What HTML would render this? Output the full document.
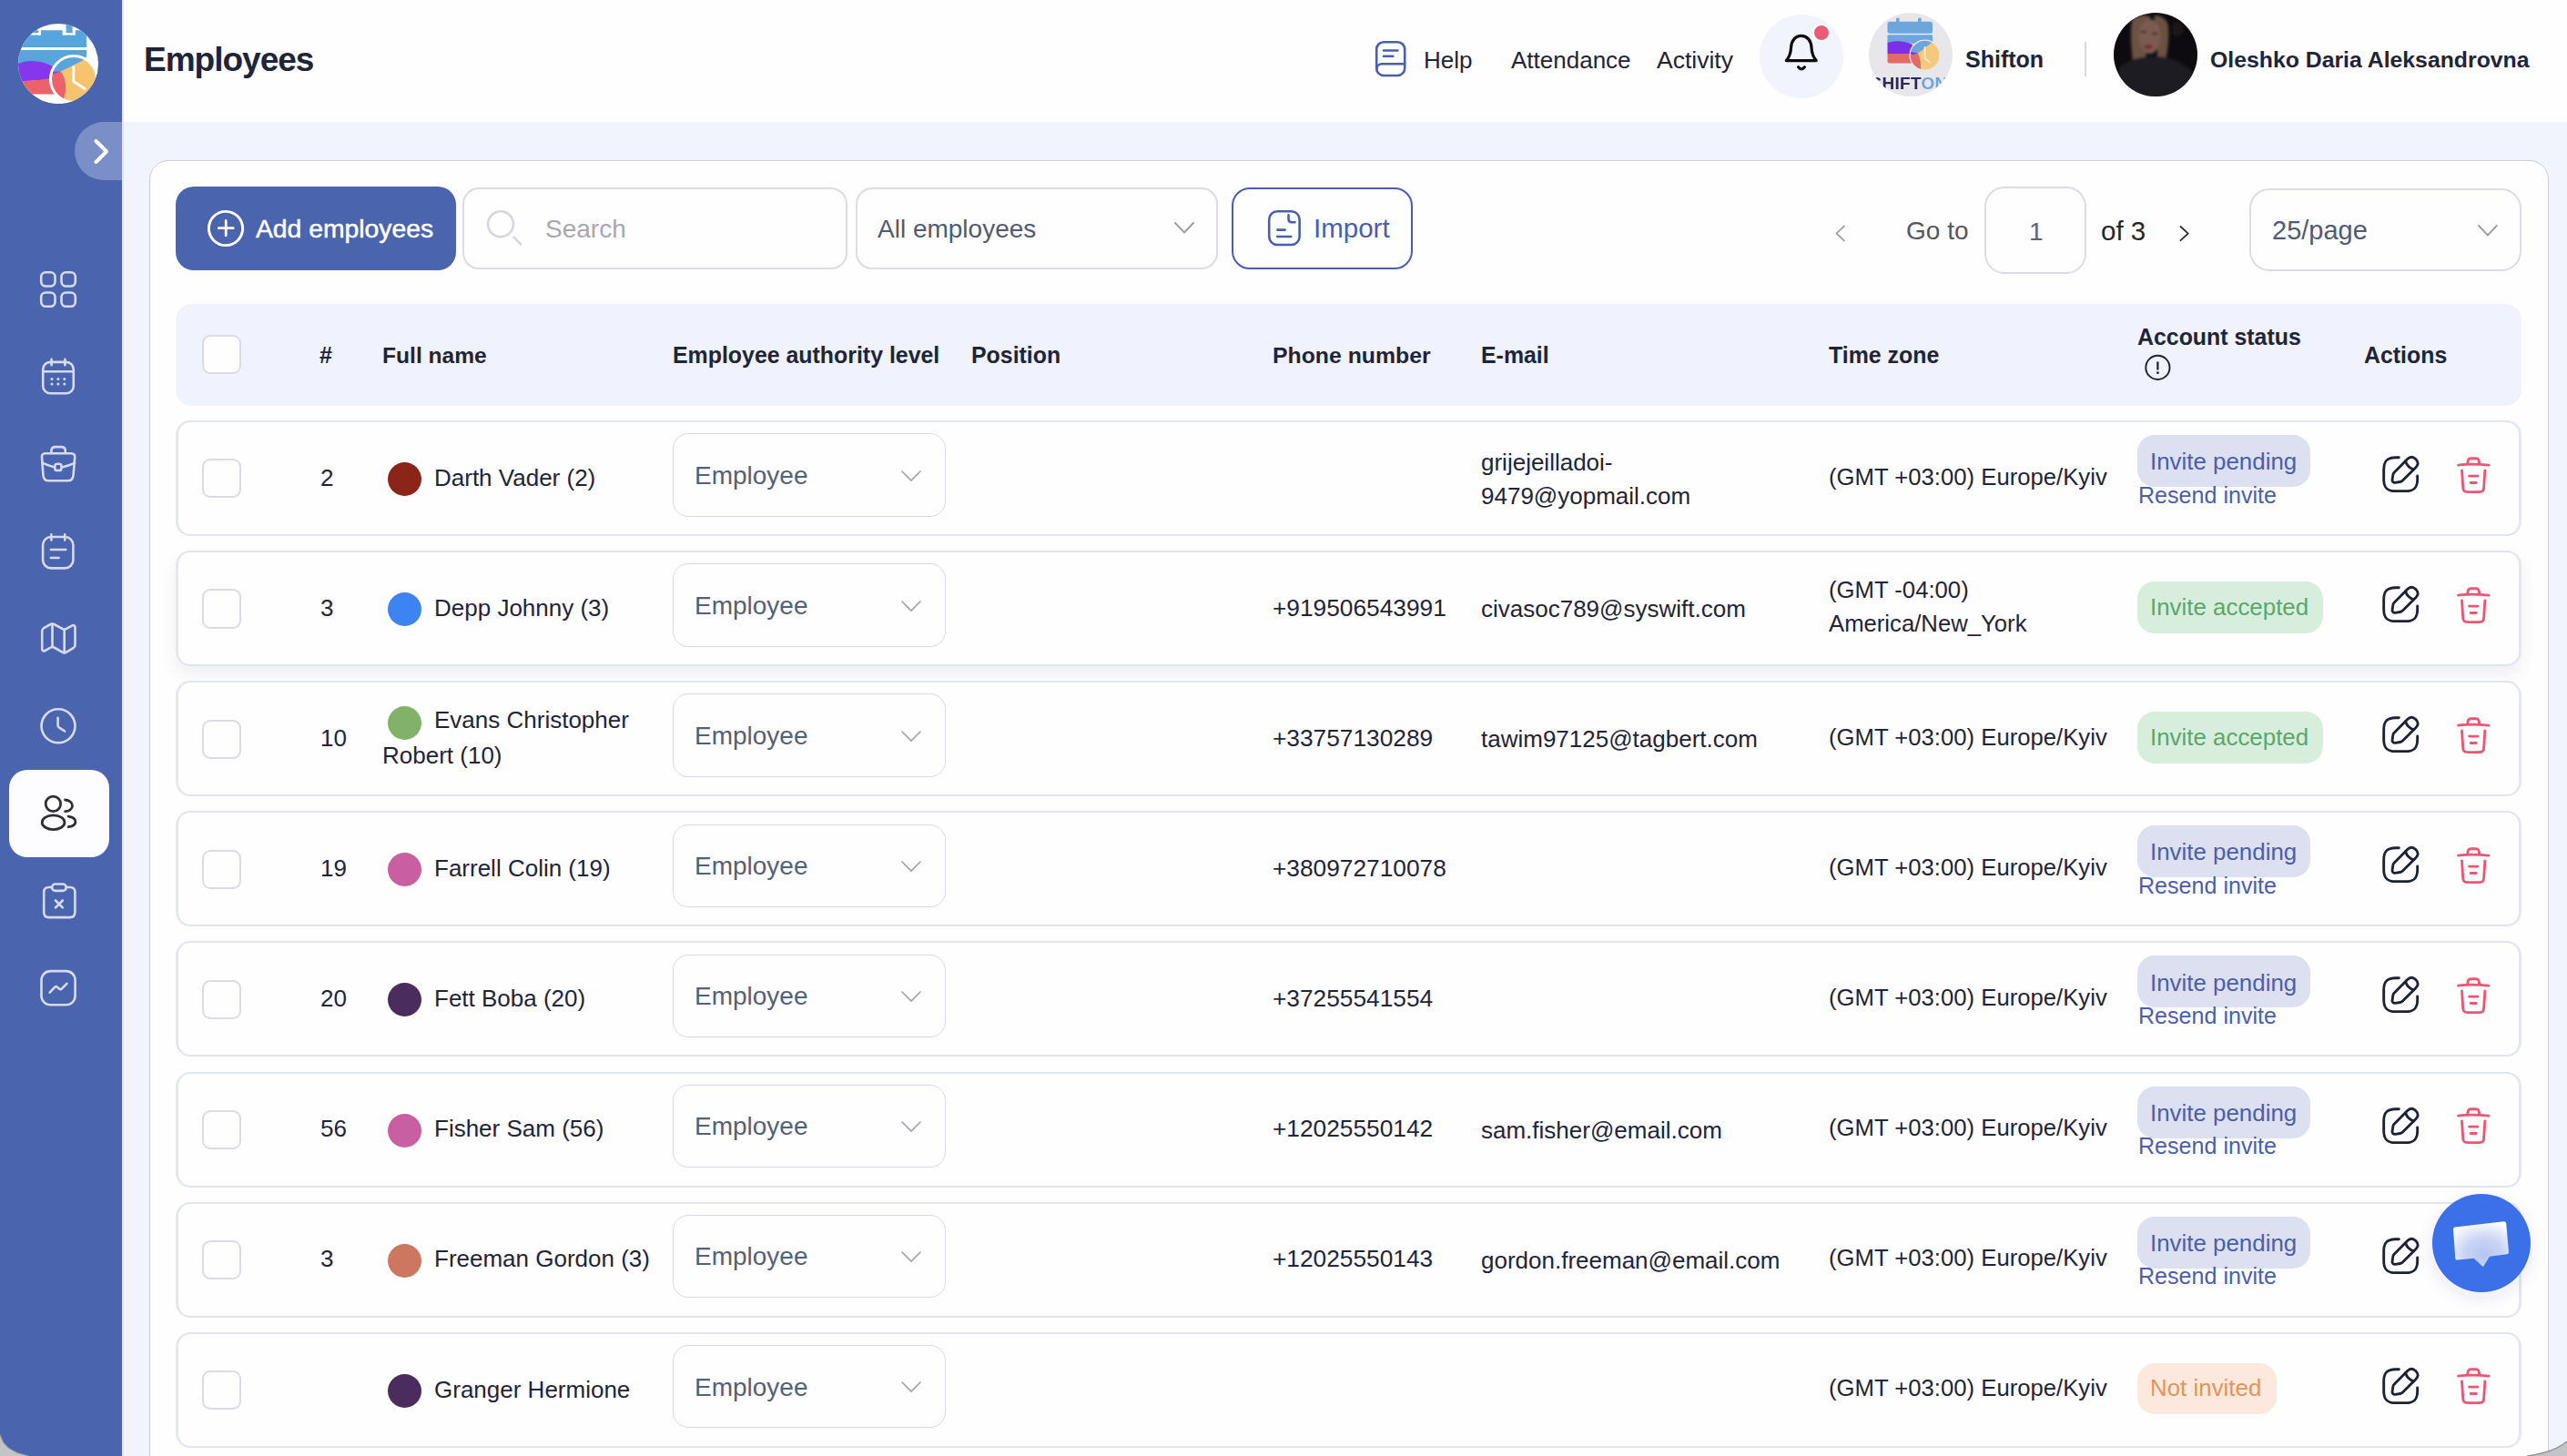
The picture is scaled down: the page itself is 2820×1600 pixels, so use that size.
<!DOCTYPE html>
<html><head><meta charset="utf-8"><title>Employees</title>
<style>
html,body{margin:0;padding:0;}
body{width:2820px;height:1600px;position:relative;overflow:hidden;background:#f1f3fd;font-family:"Liberation Sans", sans-serif;}
</style></head><body>
<div style="position:absolute;left:0px;top:0px;width:134px;height:1600px;background:#4a64ae;border-radius:0px;"></div>
<div style="position:absolute;left:134px;top:0px;width:2px;height:1600px;background:#e3e3ea;border-radius:0px;"></div>
<div style="position:absolute;left:136px;top:0px;width:2684px;height:134px;background:#fefefe;border-radius:0px;"></div>
<div style="position:absolute;left:164px;top:176px;width:2636px;height:1500px;background:#fefefe;border:1.5px solid #cdcdd3;box-sizing:border-box;border-radius:21px;"></div>
<svg style="position:absolute;left:20px;top:26px" width="88" height="88" viewBox="0 0 88 88">
<defs><clipPath id="lc"><circle cx="44" cy="44" r="44"/></clipPath></defs>
<circle cx="44" cy="44" r="44" fill="#ffffff"/>
<g clip-path="url(#lc)">
  <path d="M-2 7.2H52.5V1.1H59.7V7.2H75V26H-2Z" fill="#57a5dc"/>
  <rect x="12.5" y="10.2" width="12.4" height="2.3" fill="#ffffff"/>
  <rect x="22.3" y="7" width="2.6" height="5.5" fill="#ffffff"/>
  <rect x="48.7" y="10.2" width="14" height="2.3" fill="#ffffff"/>
  <rect x="48.7" y="6" width="3.8" height="6.5" fill="#ffffff"/>
  <rect x="59.7" y="6" width="3" height="6.5" fill="#ffffff"/>
  <path d="M-2 29H75V35L74 40C70 42 60 45 50 50L40 55C28 52 14 46 -2 44Z" fill="#57a5dc"/>
  <path d="M-2 45C12 38 30 40 45 52L48 57L38 60C25 63 12 63 -2 63Z" fill="#8536ef"/>
  <path d="M-2 63C14 63 28 62 39 59L47 57L52 72L50 80H-2Z" fill="#ec626b"/>
  <rect x="-2" y="77.5" width="54" height="14" fill="#ffffff"/>
</g>
<g clip-path="url(#lc)">
  <clipPath id="cc"><circle cx="61" cy="61" r="25.5"/></clipPath>
  <g clip-path="url(#cc)">
    <rect x="30" y="30" width="60" height="60" fill="#f6c46f"/>
    <path d="M30 30H80L79 36C70 41 60 46 46.5 52.6L36 58Z" fill="#57a5dc"/>
    <path d="M30 53L46.5 52.6L36 59Z" fill="#8536ef"/>
    <path d="M30 58L46.5 52.6C51 58 53 66 52 75C51 80 49 86 48 90H30Z" fill="#ec626b"/>
  </g>
  <circle cx="61" cy="61" r="25.5" fill="none" stroke="#ffffff" stroke-width="3"/>
  <path d="M60.8 48V63.5L73 71.5" fill="none" stroke="#ffffff" stroke-width="2.8" stroke-linecap="square"/>
</g></svg>
<div style="position:absolute;left:82px;top:134px;width:52px;height:64px;background:#7a8ec8;border-radius:32px 0 0 32px"></div>
<svg style="position:absolute;left:95px;top:145px;overflow:visible" width="35" height="40" viewBox="95 145 35 40" fill="none" ><path d="M105.5 155L117 166.5L105.5 178" stroke="#ffffff" stroke-width="4" stroke-linecap="round" stroke-linejoin="round"/></svg>
<svg style="position:absolute;left:30px;top:280px;overflow:visible" width="70" height="70" viewBox="30 280 70 70" fill="none" ><rect x="45.2" y="299.2" width="15.3" height="15.3" rx="5" stroke="#d5daf0" stroke-width="2.6" stroke-linecap="round" stroke-linejoin="round"/><rect x="67.5" y="299.2" width="15.3" height="15.3" rx="5" stroke="#d5daf0" stroke-width="2.6" stroke-linecap="round" stroke-linejoin="round"/><rect x="45.2" y="321.5" width="15.3" height="15.3" rx="5" stroke="#d5daf0" stroke-width="2.6" stroke-linecap="round" stroke-linejoin="round"/><rect x="67.5" y="321.5" width="15.3" height="15.3" rx="5" stroke="#d5daf0" stroke-width="2.6" stroke-linecap="round" stroke-linejoin="round"/></svg>
<svg style="position:absolute;left:30px;top:380px;overflow:visible" width="70" height="70" viewBox="30 380 70 70" fill="none" ><rect x="47.2" y="397.9" width="33.6" height="34.3" rx="8" stroke="#d5daf0" stroke-width="2.6" stroke-linecap="round" stroke-linejoin="round"/><path d="M47.2 408.3H80.8M56.6 394.9v6.4M71.4 394.9v6.4" stroke="#d5daf0" stroke-width="2.6" stroke-linecap="round" stroke-linejoin="round"/><circle cx="57" cy="416.5" r="1.5" fill="#d5daf0"/><circle cx="63.9" cy="416.5" r="1.5" fill="#d5daf0"/><circle cx="70.8" cy="416.5" r="1.5" fill="#d5daf0"/><circle cx="57" cy="422.1" r="1.5" fill="#d5daf0"/><circle cx="63.9" cy="422.1" r="1.5" fill="#d5daf0"/><circle cx="70.8" cy="422.1" r="1.5" fill="#d5daf0"/></svg>
<svg style="position:absolute;left:30px;top:480px;overflow:visible" width="70" height="70" viewBox="30 480 70 70" fill="none" ><path d="M49.5 498.2h29c2.6 0 3.9 1.5 3.7 4.1l-1.6 19.5c-.3 3.9-2.3 6.5-6.2 6.5H53.6c-3.9 0-5.9-2.6-6.2-6.5l-1.4-19.5c-.2-2.6 1.1-4.1 3.5-4.1Z" stroke="#d5daf0" stroke-width="2.6" stroke-linecap="round" stroke-linejoin="round"/><path d="M56.4 497.8v-2.2c0-3 1.6-4.5 4.6-4.5h6.2c3 0 4.6 1.5 4.6 4.5v2.2" stroke="#d5daf0" stroke-width="2.6" stroke-linecap="round" stroke-linejoin="round"/><path d="M46.6 508.6c4 2 8.4 3.6 12.6 4.6M69 513.2c4.5-1 9-2.6 13.1-4.6" stroke="#d5daf0" stroke-width="2.6" stroke-linecap="round" stroke-linejoin="round"/><rect x="60.3" y="509.8" width="7.2" height="7.2" rx="2.6" stroke="#d5daf0" stroke-width="2.6" stroke-linecap="round" stroke-linejoin="round"/></svg>
<svg style="position:absolute;left:30px;top:570px;overflow:visible" width="70" height="70" viewBox="30 570 70 70" fill="none" ><rect x="47.1" y="590" width="33.3" height="34.4" rx="9" stroke="#d5daf0" stroke-width="2.6" stroke-linecap="round" stroke-linejoin="round"/><path d="M56.4 587.2v6.2M71.2 587.2v6.2M55.9 604h16.4M55.9 613h8.7" stroke="#d5daf0" stroke-width="2.6" stroke-linecap="round" stroke-linejoin="round"/></svg>
<svg style="position:absolute;left:30px;top:670px;overflow:visible" width="70" height="70" viewBox="30 670 70 70" fill="none" ><path d="M46.2 693.5C46.2 692 46.9 691 48.2 690.2L55.6 686C56.8 685.3 58.2 685.3 59.4 686L68.9 691.1C70.1 691.8 71.3 691.8 72.5 691.1L79 687.6C80.9 686.6 82.5 687.5 82.5 689.5V708.8C82.5 710.3 81.8 711.4 80.5 712.1L72.5 716.8C71.3 717.5 70 717.5 68.9 716.8L59.4 711.5C58.2 710.8 57 710.8 55.8 711.5L49.5 715C47.7 716 46.2 715.1 46.2 713Z" stroke="#d5daf0" stroke-width="2.6" stroke-linecap="round" stroke-linejoin="round"/><path d="M57.5 685.8v25.2M70.7 691.8v25.5" stroke="#d5daf0" stroke-width="2.6" stroke-linecap="round" stroke-linejoin="round"/></svg>
<svg style="position:absolute;left:30px;top:760px;overflow:visible" width="70" height="70" viewBox="30 760 70 70" fill="none" ><circle cx="64" cy="797.8" r="18.5" stroke="#d5daf0" stroke-width="2.6" stroke-linecap="round" stroke-linejoin="round"/><path d="M63.6 788.8v8.4c0 .9.5 1.6 1.2 2.1l6.4 4.2" stroke="#d5daf0" stroke-width="2.6" stroke-linecap="round" stroke-linejoin="round"/></svg>
<div style="position:absolute;left:10px;top:846px;width:110px;height:96px;border-radius:20px;background:#fdfcfe"></div>
<svg style="position:absolute;left:30px;top:860px;overflow:visible" width="70" height="70" viewBox="30 860 70 70" fill="none" ><circle cx="58.4" cy="883.4" r="8.2" stroke="#2e2e35" stroke-width="2.8" stroke-linecap="round" stroke-linejoin="round"/><ellipse cx="58.6" cy="903.7" rx="12.4" ry="7.9" stroke="#2e2e35" stroke-width="2.8" stroke-linecap="round" stroke-linejoin="round"/><path d="M71.6 879c4.6.2 7.9 3.1 7.9 6.4s-3.3 6.1-7.9 6.3" stroke="#2e2e35" stroke-width="2.8" stroke-linecap="round" stroke-linejoin="round"/><path d="M75.2 897.1c4.6.8 7.7 3.1 7.7 5.8s-3.1 5-7.7 5.8" stroke="#2e2e35" stroke-width="2.8" stroke-linecap="round" stroke-linejoin="round"/></svg>
<svg style="position:absolute;left:30px;top:950px;overflow:visible" width="70" height="70" viewBox="30 950 70 70" fill="none" ><path d="M56.9 975H53.6c-3.6 0-5.4 2.1-5.4 5.6v21.6c0 3.6 2 5.9 5.6 5.9h23c3.6 0 5.6-2.3 5.6-5.9v-21.6c0-3.5-1.8-5.6-5.4-5.6H72.9" stroke="#d5daf0" stroke-width="2.6" stroke-linecap="round" stroke-linejoin="round"/><rect x="57.1" y="971.5" width="15.6" height="7.4" rx="3.7" stroke="#d5daf0" stroke-width="2.6" stroke-linecap="round" stroke-linejoin="round"/><path d="M61 989.5l7.8 7.8M68.8 989.5l-7.8 7.8" stroke="#d5daf0" stroke-width="2.6" stroke-linecap="round" stroke-linejoin="round"/></svg>
<svg style="position:absolute;left:30px;top:1050px;overflow:visible" width="70" height="70" viewBox="30 1050 70 70" fill="none" ><rect x="45.5" y="1067.1" width="37.1" height="37.2" rx="10" stroke="#d5daf0" stroke-width="2.6" stroke-linecap="round" stroke-linejoin="round"/><path d="M54.7 1090.7l5.2-5.6c.9-1 2.3-1 3.2-.2l1.8 1.6c.9.8 2.3.7 3.1-.2l5.4-5.5" stroke="#d5daf0" stroke-width="2.6" stroke-linecap="round" stroke-linejoin="round"/></svg>
<div style="position:absolute;left:158px;top:47.0px;font-size:37px;line-height:37px;font-weight:700;color:#1e2439;white-space:nowrap;letter-spacing:-1.0px;">Employees</div>
<svg style="position:absolute;left:1500px;top:35px;overflow:visible" width="60" height="60" viewBox="1500 35 60 60" fill="none" ><rect x="1512.2" y="46.2" width="31" height="36.8" rx="8" stroke="#4a5eae" stroke-width="2.6" stroke-linecap="round" stroke-linejoin="round"/><path d="M1512.2 76c0-3.3 2.6-5.8 5.8-5.8h25.2M1520 55.5h15.4M1520 61.8h10.3" stroke="#4a5eae" stroke-width="2.6" stroke-linecap="round" stroke-linejoin="round"/></svg>
<div style="position:absolute;left:1564px;top:53.0px;font-size:26px;line-height:26px;font-weight:400;color:#1e2439;white-space:nowrap;">Help</div>
<div style="position:absolute;left:1660px;top:53.0px;font-size:26px;line-height:26px;font-weight:400;color:#1e2439;white-space:nowrap;">Attendance</div>
<div style="position:absolute;left:1820px;top:52.6px;font-size:26.5px;line-height:26.5px;font-weight:400;color:#1e2439;white-space:nowrap;">Activity</div>
<div style="position:absolute;left:1933px;top:16px;width:92px;height:92px;border-radius:50%;background:#f1f3fd"></div>
<svg style="position:absolute;left:1950px;top:30px;overflow:visible" width="60" height="60" viewBox="1950 30 60 60" fill="none" ><path d="M1962.3 66.6h33c-3.6-4-5-8.6-5.3-14.6c-.4-7.3-4.8-12.7-11.2-12.7s-10.8 5.4-11.2 12.7c-.3 6-1.7 10.6-5.3 14.6Z" stroke="#0c0c10" stroke-width="3.2" stroke-linecap="round" stroke-linejoin="round"/><path d="M1975.6 73.8c1.4 1.6 2.4 2.2 3.4 2.2s2-.6 3.4-2.2" stroke="#0c0c10" stroke-width="3.2" stroke-linecap="round" stroke-linejoin="round"/></svg>
<div style="position:absolute;left:1991px;top:26px;width:20px;height:20px;border-radius:50%;background:#e85c75;border:2px solid #ffffff;box-sizing:border-box"></div>
<svg style="position:absolute;left:2053px;top:14px" width="92" height="92" viewBox="0 0 92 92">
<defs><clipPath id="sa"><circle cx="46" cy="46" r="46"/></clipPath><filter id="bl"><feGaussianBlur stdDeviation="0.7"/></filter></defs>
<circle cx="46" cy="46" r="46" fill="#e7e6eb"/>
<g clip-path="url(#sa)" filter="url(#bl)">
<rect x="20.5" y="9.8" width="49.5" height="13" rx="2.5" fill="#6ca6dc"/>
<rect x="30" y="5.6" width="3.6" height="8" rx="1.5" fill="#6ca6dc"/><rect x="54" y="5.6" width="3.6" height="8" rx="1.5" fill="#6ca6dc"/>

<rect x="20.5" y="24.3" width="49.5" height="9.5" fill="#6ca6dc"/>
<path d="M20.5 33C30 30 40 31 48 35V44.9H20.5Z" fill="#7d2fe8"/>
<path d="M20.5 44.9H48V55.6H23C21.5 55.6 20.5 54.5 20.5 53Z" fill="#e46a6a"/>
<circle cx="61.6" cy="46.7" r="16" fill="#f3c97c"/>
<path d="M45.6 46.7C45.6 37.9 52.8 30.7 61.6 30.7C64.5 30.7 67 31.4 69.2 32.7L54 44.5Z" fill="#6ca6dc"/>
<path d="M46 43L54 44.5L47 47Z" fill="#7d2fe8"/>
<path d="M45.6 46.7L54 44.5C56.5 50 57.5 56 57 62C50.5 60.5 45.6 54 45.6 46.7Z" fill="#e46a6a"/>
<circle cx="61.6" cy="46.7" r="16.6" fill="none" stroke="#e7e6eb" stroke-width="1.2"/>
<path d="M61.6 37V50L67.5 55" fill="none" stroke="#f8e8c8" stroke-width="1.8"/>
<text x="44" y="83.7" text-anchor="middle" font-family="Liberation Sans" font-weight="700" font-size="19" fill="#2a2560" letter-spacing="0.3">SHIFT<tspan fill="#6ca6dc">ON</tspan></text>
</g></svg>
<div style="position:absolute;left:2159px;top:53.3px;font-size:25px;line-height:25px;font-weight:700;color:#1e2439;white-space:nowrap;">Shifton</div>
<div style="position:absolute;left:2290px;top:46px;width:2px;height:38px;background:#d8d8e0;border-radius:0px;"></div>
<svg style="position:absolute;left:2322px;top:14px" width="92" height="92" viewBox="0 0 92 92">
<defs><clipPath id="ua"><circle cx="46" cy="46" r="46"/></clipPath>
<filter id="ub" x="-20%" y="-20%" width="140%" height="140%"><feGaussianBlur stdDeviation="1.6"/></filter></defs>
<circle cx="46" cy="46" r="46" fill="#0d0b10"/>
<g clip-path="url(#ua)" filter="url(#ub)">
<ellipse cx="70" cy="18" rx="6" ry="8" fill="#1a1412"/>
<path d="M20 8C24 3 34 2 40 4L38 30L33 62L22 60C19 42 18 22 20 8Z" fill="#6b5242"/>
<path d="M44 3C52 3 58 6 60 14C61 26 60 40 57 52L48 50L47 20Z" fill="#6a5141"/>
<ellipse cx="39.5" cy="26" rx="12" ry="19" fill="#7b5c51"/>
<ellipse cx="33" cy="21" rx="3.5" ry="1.2" fill="#3a2a28"/>
<ellipse cx="45" cy="23" rx="3.5" ry="1.2" fill="#3a2a28"/>
<ellipse cx="38" cy="37.5" rx="4.8" ry="2.6" fill="#7a2a31"/>
<path d="M6 60C18 50 32 48 46 48C62 48 74 54 86 64V92H6Z" fill="#1c1a20"/>
</g></svg>
<div style="position:absolute;left:2428px;top:53.5px;font-size:24.8px;line-height:24.8px;font-weight:700;color:#1e2439;white-space:nowrap;">Oleshko Daria Aleksandrovna</div>
<div style="position:absolute;left:193px;top:205px;width:308px;height:92px;background:#4a64ae;border-radius:20px;"></div>
<svg style="position:absolute;left:225px;top:228px;overflow:visible" width="46" height="46" viewBox="225 228 46 46" fill="none" ><circle cx="248" cy="251" r="18.6" stroke="#ffffff" stroke-width="2.9"/><path d="M240.3 250.7H256.2M248.2 242.5V258.8" stroke="#ffffff" stroke-width="2.8" stroke-linecap="round"/></svg>
<div style="position:absolute;left:281px;top:237.1px;font-size:28.3px;line-height:28.3px;font-weight:400;color:#ffffff;white-space:nowrap;-webkit-text-stroke:0.5px #ffffff;">Add employees</div>
<div style="position:absolute;left:508px;top:206px;width:423px;height:90px;background:#fefefe;border:2px solid #dddbe7;box-sizing:border-box;border-radius:18px;"></div>
<svg style="position:absolute;left:528px;top:225px;overflow:visible" width="50" height="50" viewBox="528 225 50 50" fill="none" ><circle cx="550" cy="246.3" r="14" stroke="#d7d5e3" stroke-width="2.6"/><path d="M564.5 260.7L572 268.3" stroke="#d7d5e3" stroke-width="2.6" stroke-linecap="round"/></svg>
<div style="position:absolute;left:599px;top:237.7px;font-size:28px;line-height:28px;font-weight:400;color:#a8a7b1;white-space:nowrap;">Search</div>
<div style="position:absolute;left:940px;top:206px;width:398px;height:90px;background:#fefefe;border:2px solid #dddbe7;box-sizing:border-box;border-radius:18px;"></div>
<div style="position:absolute;left:964px;top:237.7px;font-size:28px;line-height:28px;font-weight:400;color:#505b72;white-space:nowrap;">All employees</div>
<svg style="position:absolute;left:1288.5px;top:243px;overflow:visible" width="24" height="14.5" viewBox="1288.5 243 24 14.5" fill="none" ><path d="M1290.5 245L1300.5 255.5L1310.5 245" stroke="#9d9da8" stroke-width="1.9" stroke-linecap="round" stroke-linejoin="round"/></svg>
<div style="position:absolute;left:1353px;top:206px;width:199px;height:90px;background:#fefefe;border:2.5px solid #4a5eae;box-sizing:border-box;border-radius:20px;"></div>
<svg style="position:absolute;left:1385px;top:222px;overflow:visible" width="60" height="60" viewBox="1385 222 60 60" fill="none" ><rect x="1394.2" y="232.2" width="33.4" height="36.8" rx="9" stroke="#4a5eae" stroke-width="2.6" stroke-linecap="round" stroke-linejoin="round"/><path d="M1415.5 236.4v4.2c0 2.3 1.3 3.7 3.6 3.7h3.4M1403.3 252.6h8.3M1403.3 260h15" stroke="#4a5eae" stroke-width="2.6" stroke-linecap="round" stroke-linejoin="round"/></svg>
<div style="position:absolute;left:1443px;top:236.4px;font-size:29.5px;line-height:29.5px;font-weight:400;color:#4a5eae;white-space:nowrap;">Import</div>
<svg style="position:absolute;left:2010px;top:242px;overflow:visible" width="25" height="28" viewBox="2010 242 25 28" fill="none" ><path d="M2026 248.5L2017.5 256.5L2026 264.5" stroke="#a3a3ab" stroke-width="1.8" stroke-linecap="round" stroke-linejoin="round"/></svg>
<div style="position:absolute;left:2094px;top:240.1px;font-size:28px;line-height:28px;font-weight:400;color:#56565d;white-space:nowrap;">Go to</div>
<div style="position:absolute;left:2180px;top:205px;width:112px;height:96px;background:#fefefe;border:2px solid #dddbe7;box-sizing:border-box;border-radius:22px;"></div>
<div style="position:absolute;left:2229px;top:240.8px;font-size:28px;line-height:28px;font-weight:400;color:#5a6478;white-space:nowrap;">1</div>
<div style="position:absolute;left:2308px;top:238.8px;font-size:29.5px;line-height:29.5px;font-weight:400;color:#25252c;white-space:nowrap;">of 3</div>
<svg style="position:absolute;left:2388px;top:242px;overflow:visible" width="25" height="28" viewBox="2388 242 25 28" fill="none" ><path d="M2395.5 249L2403.8 256.6L2395.5 264.2" stroke="#2b2b33" stroke-width="1.8" stroke-linecap="round" stroke-linejoin="round"/></svg>
<div style="position:absolute;left:2471px;top:207px;width:299px;height:91px;background:#fefefe;border:2px solid #dddbe7;box-sizing:border-box;border-radius:22px;"></div>
<div style="position:absolute;left:2496px;top:239.3px;font-size:29px;line-height:29px;font-weight:400;color:#505b72;white-space:nowrap;">25/page</div>
<svg style="position:absolute;left:2721px;top:246px;overflow:visible" width="23.8" height="14.5" viewBox="2721 246 23.8 14.5" fill="none" ><path d="M2723 248L2732.9 258.5L2742.8 248" stroke="#9d9da8" stroke-width="1.9" stroke-linecap="round" stroke-linejoin="round"/></svg>
<div style="position:absolute;left:193px;top:334px;width:2577px;height:112px;background:#f0f2fd;border-radius:18px;"></div>
<div style="position:absolute;left:221.5px;top:368px;width:43px;height:43px;background:#fefefe;border:2px solid #dcdae5;box-sizing:border-box;border-radius:9px;"></div>
<div style="position:absolute;left:351px;top:378.3px;font-size:25px;line-height:25px;font-weight:700;color:#1e2439;white-space:nowrap;">#</div>
<div style="position:absolute;left:420px;top:378.7px;font-size:24.6px;line-height:24.6px;font-weight:700;color:#1e2439;white-space:nowrap;">Full name</div>
<div style="position:absolute;left:739px;top:378.4px;font-size:24.9px;line-height:24.9px;font-weight:700;color:#1e2439;white-space:nowrap;">Employee authority level</div>
<div style="position:absolute;left:1067px;top:378.4px;font-size:24.9px;line-height:24.9px;font-weight:700;color:#1e2439;white-space:nowrap;">Position</div>
<div style="position:absolute;left:1398px;top:378.5px;font-size:24.8px;line-height:24.8px;font-weight:700;color:#1e2439;white-space:nowrap;">Phone number</div>
<div style="position:absolute;left:1627px;top:378.4px;font-size:24.9px;line-height:24.9px;font-weight:700;color:#1e2439;white-space:nowrap;">E-mail</div>
<div style="position:absolute;left:2009px;top:378.4px;font-size:24.9px;line-height:24.9px;font-weight:700;color:#1e2439;white-space:nowrap;">Time zone</div>
<div style="position:absolute;left:2348px;top:357.8px;font-size:24.9px;line-height:24.9px;font-weight:700;color:#1e2439;white-space:nowrap;">Account status</div>
<svg style="position:absolute;left:2350px;top:385px;overflow:visible" width="40" height="40" viewBox="2350 385 40 40" fill="none" ><circle cx="2370.4" cy="403.9" r="13.1" stroke="#1d2136" stroke-width="1.9"/><path d="M2370.4 398.3v7.4" stroke="#1d2136" stroke-width="2.2" stroke-linecap="round"/><circle cx="2370.4" cy="409.7" r="1.4" fill="#1d2136"/></svg>
<div style="position:absolute;left:2597px;top:378.4px;font-size:24.9px;line-height:24.9px;font-weight:700;color:#1e2439;white-space:nowrap;">Actions</div>
<div style="position:absolute;left:193px;top:462.0px;width:2577px;height:127px;background:#fefefe;border:2px solid #e1e4f3;box-sizing:border-box;border-radius:16px;border-left:3.5px solid #e2e7f2;border-right:3.5px solid #e2e7f2;"></div>
<div style="position:absolute;left:221.5px;top:504.3px;width:43px;height:43.2px;background:#fefefe;border:2px solid #dcdae5;box-sizing:border-box;border-radius:9px;"></div>
<div style="position:absolute;left:352px;top:511.8px;font-size:26px;line-height:26px;font-weight:400;color:#1e2439;white-space:nowrap;">2</div>
<div style="position:absolute;left:426px;top:508.0px;width:37px;height:37px;border-radius:50%;background:#8b2519"></div>
<div style="position:absolute;left:477px;top:511.8px;font-size:26px;line-height:26px;font-weight:400;color:#1e2439;white-space:nowrap;">Darth Vader (2)</div>
<div style="position:absolute;left:739px;top:476.2px;width:300px;height:91.5px;background:#fefefe;border:1.8px solid #dbd9e5;box-sizing:border-box;border-radius:17px;"></div>
<div style="position:absolute;left:763px;top:508.8px;font-size:28px;line-height:28px;font-weight:400;color:#536077;white-space:nowrap;">Employee</div>
<svg style="position:absolute;left:989px;top:515.5px;overflow:visible" width="24" height="14.2" viewBox="989 515.5 24 14.2" fill="none" ><path d="M991 517.5L1001.0 527.7L1011 517.5" stroke="#a3a3ad" stroke-width="1.7" stroke-linecap="round" stroke-linejoin="round"/></svg>
<div style="position:absolute;left:1627px;top:494.5px;font-size:26px;line-height:26px;font-weight:400;color:#1e2439;white-space:nowrap;">grijejeilladoi-</div><div style="position:absolute;left:1627px;top:531.5px;font-size:26px;line-height:26px;font-weight:400;color:#1e2439;white-space:nowrap;">9479@yopmail.com</div>
<div style="position:absolute;left:2009px;top:511.5px;font-size:25.7px;line-height:25.7px;font-weight:400;color:#1e2439;white-space:nowrap;">(GMT +03:00) Europe/Kyiv</div>
<div style="position:absolute;left:2348px;top:478.0px;width:190px;height:57px;background:#dde0f1;border-radius:19px;"></div>
<div style="position:absolute;left:2362px;top:495.1px;font-size:25.9px;line-height:25.9px;font-weight:400;color:#4a5eae;white-space:nowrap;">Invite pending</div>
<div style="position:absolute;left:2349px;top:531.6px;font-size:25.1px;line-height:25.1px;font-weight:400;color:#4a5eae;white-space:nowrap;">Resend invite</div>
<svg style="position:absolute;left:2614.5px;top:499.0px" width="44.4" height="44.4" viewBox="0 0 24 24" fill="none" stroke="#1d2136" stroke-width="1.55" stroke-linecap="round" stroke-linejoin="round"><path d="M11 2H9C4 2 2 4 2 9v6c0 5 2 7 7 7h6c5 0 7-2 7-7v-2" /><path d="M16.04 3.02 8.16 10.9c-.3.3-.6.89-.66 1.32l-.43 3.01c-.16 1.09.61 1.85 1.7 1.7l3.01-.43c.42-.06 1.01-.36 1.32-.66l7.88-7.88c1.36-1.36 2-2.94 0-4.94-2-2-3.58-1.36-4.94 0Z" /><path d="M14.91 4.15a7.144 7.144 0 0 0 4.94 4.94" /></svg>
<svg style="position:absolute;left:2694.5px;top:499.5px" width="44.4" height="44.4" viewBox="0 0 24 24" fill="none" stroke="#ec5673" stroke-width="1.55" stroke-linecap="round" stroke-linejoin="round"><path d="M21 5.98c-3.33-.33-6.68-.5-10.02-.5-1.98 0-3.96.1-5.94.3L3 5.98" /><path d="m8.5 4.97.22-1.31C8.88 2.71 9 2 10.69 2h2.62c1.69 0 1.82.75 1.97 1.67l.22 1.3" /><path d="m18.85 9.14-.65 10.07C18.09 20.78 18 22 15.21 22H8.79C6 22 5.91 20.78 5.8 19.21L5.15 9.14" /><path d="M10.33 16.5h3.33M9.5 12.5h5" /></svg>
<div style="position:absolute;left:193px;top:605.1px;width:2577px;height:127px;background:#fefefe;border:2px solid #e1e4f3;box-sizing:border-box;border-radius:16px;box-shadow:0 10px 18px rgba(60,60,110,0.07);border-left:3.5px solid #e2e7f2;border-right:3.5px solid #e2e7f2;"></div>
<div style="position:absolute;left:221.5px;top:647.4px;width:43px;height:43.2px;background:#fefefe;border:2px solid #dcdae5;box-sizing:border-box;border-radius:9px;"></div>
<div style="position:absolute;left:352px;top:654.9px;font-size:26px;line-height:26px;font-weight:400;color:#1e2439;white-space:nowrap;">3</div>
<div style="position:absolute;left:426px;top:651.1px;width:37px;height:37px;border-radius:50%;background:#3d83f1"></div>
<div style="position:absolute;left:477px;top:654.9px;font-size:26px;line-height:26px;font-weight:400;color:#1e2439;white-space:nowrap;">Depp Johnny (3)</div>
<div style="position:absolute;left:739px;top:619.3000000000001px;width:300px;height:91.5px;background:#fefefe;border:1.8px solid #dbd9e5;box-sizing:border-box;border-radius:17px;"></div>
<div style="position:absolute;left:763px;top:651.9px;font-size:28px;line-height:28px;font-weight:400;color:#536077;white-space:nowrap;">Employee</div>
<svg style="position:absolute;left:989px;top:658.6px;overflow:visible" width="24" height="14.2" viewBox="989 658.6 24 14.2" fill="none" ><path d="M991 660.6L1001.0 670.8000000000001L1011 660.6" stroke="#a3a3ad" stroke-width="1.7" stroke-linecap="round" stroke-linejoin="round"/></svg>
<div style="position:absolute;left:1398px;top:654.6px;font-size:26.3px;line-height:26.3px;font-weight:400;color:#1e2439;white-space:nowrap;">+919506543991</div>
<div style="position:absolute;left:1627px;top:656.1px;font-size:26px;line-height:26px;font-weight:400;color:#1e2439;white-space:nowrap;">civasoc789@syswift.com</div>
<div style="position:absolute;left:2009px;top:636.4px;font-size:25.7px;line-height:25.7px;font-weight:400;color:#1e2439;white-space:nowrap;">(GMT -04:00)</div><div style="position:absolute;left:2009px;top:672.9px;font-size:25.7px;line-height:25.7px;font-weight:400;color:#1e2439;white-space:nowrap;">America/New_York</div>
<div style="position:absolute;left:2348px;top:638.6px;width:204px;height:57.5px;background:#d7eedc;border-radius:19px;"></div>
<div style="position:absolute;left:2362px;top:654.5px;font-size:25.9px;line-height:25.9px;font-weight:400;color:#5aa76b;white-space:nowrap;">Invite accepted</div>
<svg style="position:absolute;left:2614.5px;top:642.1px" width="44.4" height="44.4" viewBox="0 0 24 24" fill="none" stroke="#1d2136" stroke-width="1.55" stroke-linecap="round" stroke-linejoin="round"><path d="M11 2H9C4 2 2 4 2 9v6c0 5 2 7 7 7h6c5 0 7-2 7-7v-2" /><path d="M16.04 3.02 8.16 10.9c-.3.3-.6.89-.66 1.32l-.43 3.01c-.16 1.09.61 1.85 1.7 1.7l3.01-.43c.42-.06 1.01-.36 1.32-.66l7.88-7.88c1.36-1.36 2-2.94 0-4.94-2-2-3.58-1.36-4.94 0Z" /><path d="M14.91 4.15a7.144 7.144 0 0 0 4.94 4.94" /></svg>
<svg style="position:absolute;left:2694.5px;top:642.6px" width="44.4" height="44.4" viewBox="0 0 24 24" fill="none" stroke="#ec5673" stroke-width="1.55" stroke-linecap="round" stroke-linejoin="round"><path d="M21 5.98c-3.33-.33-6.68-.5-10.02-.5-1.98 0-3.96.1-5.94.3L3 5.98" /><path d="m8.5 4.97.22-1.31C8.88 2.71 9 2 10.69 2h2.62c1.69 0 1.82.75 1.97 1.67l.22 1.3" /><path d="m18.85 9.14-.65 10.07C18.09 20.78 18 22 15.21 22H8.79C6 22 5.91 20.78 5.8 19.21L5.15 9.14" /><path d="M10.33 16.5h3.33M9.5 12.5h5" /></svg>
<div style="position:absolute;left:193px;top:748.2px;width:2577px;height:127px;background:#fefefe;border:2px solid #e1e4f3;box-sizing:border-box;border-radius:16px;border-left:3.5px solid #e2e7f2;border-right:3.5px solid #e2e7f2;"></div>
<div style="position:absolute;left:221.5px;top:790.5px;width:43px;height:43.2px;background:#fefefe;border:2px solid #dcdae5;box-sizing:border-box;border-radius:9px;"></div>
<div style="position:absolute;left:352px;top:798.0px;font-size:26px;line-height:26px;font-weight:400;color:#1e2439;white-space:nowrap;">10</div>
<div style="position:absolute;left:426px;top:776.2px;width:37px;height:37px;border-radius:50%;background:#82b26a"></div>
<div style="position:absolute;left:477px;top:778.0px;font-size:26px;line-height:26px;font-weight:400;color:#1e2439;white-space:nowrap;">Evans Christopher</div>
<div style="position:absolute;left:420px;top:817.0px;font-size:26px;line-height:26px;font-weight:400;color:#1e2439;white-space:nowrap;">Robert (10)</div>
<div style="position:absolute;left:739px;top:762.4000000000001px;width:300px;height:91.5px;background:#fefefe;border:1.8px solid #dbd9e5;box-sizing:border-box;border-radius:17px;"></div>
<div style="position:absolute;left:763px;top:795.0px;font-size:28px;line-height:28px;font-weight:400;color:#536077;white-space:nowrap;">Employee</div>
<svg style="position:absolute;left:989px;top:801.7px;overflow:visible" width="24" height="14.2" viewBox="989 801.7 24 14.2" fill="none" ><path d="M991 803.7L1001.0 813.9000000000001L1011 803.7" stroke="#a3a3ad" stroke-width="1.7" stroke-linecap="round" stroke-linejoin="round"/></svg>
<div style="position:absolute;left:1398px;top:797.7px;font-size:26.3px;line-height:26.3px;font-weight:400;color:#1e2439;white-space:nowrap;">+33757130289</div>
<div style="position:absolute;left:1627px;top:799.2px;font-size:26px;line-height:26px;font-weight:400;color:#1e2439;white-space:nowrap;">tawim97125@tagbert.com</div>
<div style="position:absolute;left:2009px;top:797.7px;font-size:25.7px;line-height:25.7px;font-weight:400;color:#1e2439;white-space:nowrap;">(GMT +03:00) Europe/Kyiv</div>
<div style="position:absolute;left:2348px;top:781.7px;width:204px;height:57.5px;background:#d7eedc;border-radius:19px;"></div>
<div style="position:absolute;left:2362px;top:797.6px;font-size:25.9px;line-height:25.9px;font-weight:400;color:#5aa76b;white-space:nowrap;">Invite accepted</div>
<svg style="position:absolute;left:2614.5px;top:785.2px" width="44.4" height="44.4" viewBox="0 0 24 24" fill="none" stroke="#1d2136" stroke-width="1.55" stroke-linecap="round" stroke-linejoin="round"><path d="M11 2H9C4 2 2 4 2 9v6c0 5 2 7 7 7h6c5 0 7-2 7-7v-2" /><path d="M16.04 3.02 8.16 10.9c-.3.3-.6.89-.66 1.32l-.43 3.01c-.16 1.09.61 1.85 1.7 1.7l3.01-.43c.42-.06 1.01-.36 1.32-.66l7.88-7.88c1.36-1.36 2-2.94 0-4.94-2-2-3.58-1.36-4.94 0Z" /><path d="M14.91 4.15a7.144 7.144 0 0 0 4.94 4.94" /></svg>
<svg style="position:absolute;left:2694.5px;top:785.7px" width="44.4" height="44.4" viewBox="0 0 24 24" fill="none" stroke="#ec5673" stroke-width="1.55" stroke-linecap="round" stroke-linejoin="round"><path d="M21 5.98c-3.33-.33-6.68-.5-10.02-.5-1.98 0-3.96.1-5.94.3L3 5.98" /><path d="m8.5 4.97.22-1.31C8.88 2.71 9 2 10.69 2h2.62c1.69 0 1.82.75 1.97 1.67l.22 1.3" /><path d="m18.85 9.14-.65 10.07C18.09 20.78 18 22 15.21 22H8.79C6 22 5.91 20.78 5.8 19.21L5.15 9.14" /><path d="M10.33 16.5h3.33M9.5 12.5h5" /></svg>
<div style="position:absolute;left:193px;top:891.3px;width:2577px;height:127px;background:#fefefe;border:2px solid #e1e4f3;box-sizing:border-box;border-radius:16px;border-left:3.5px solid #e2e7f2;border-right:3.5px solid #e2e7f2;"></div>
<div style="position:absolute;left:221.5px;top:933.5999999999999px;width:43px;height:43.2px;background:#fefefe;border:2px solid #dcdae5;box-sizing:border-box;border-radius:9px;"></div>
<div style="position:absolute;left:352px;top:941.1px;font-size:26px;line-height:26px;font-weight:400;color:#1e2439;white-space:nowrap;">19</div>
<div style="position:absolute;left:426px;top:937.3px;width:37px;height:37px;border-radius:50%;background:#c95fa0"></div>
<div style="position:absolute;left:477px;top:941.1px;font-size:26px;line-height:26px;font-weight:400;color:#1e2439;white-space:nowrap;">Farrell Colin (19)</div>
<div style="position:absolute;left:739px;top:905.5px;width:300px;height:91.5px;background:#fefefe;border:1.8px solid #dbd9e5;box-sizing:border-box;border-radius:17px;"></div>
<div style="position:absolute;left:763px;top:938.1px;font-size:28px;line-height:28px;font-weight:400;color:#536077;white-space:nowrap;">Employee</div>
<svg style="position:absolute;left:989px;top:944.8px;overflow:visible" width="24" height="14.2" viewBox="989 944.8 24 14.2" fill="none" ><path d="M991 946.8L1001.0 957.0L1011 946.8" stroke="#a3a3ad" stroke-width="1.7" stroke-linecap="round" stroke-linejoin="round"/></svg>
<div style="position:absolute;left:1398px;top:940.8px;font-size:26.3px;line-height:26.3px;font-weight:400;color:#1e2439;white-space:nowrap;">+380972710078</div>
<div style="position:absolute;left:2009px;top:940.8px;font-size:25.7px;line-height:25.7px;font-weight:400;color:#1e2439;white-space:nowrap;">(GMT +03:00) Europe/Kyiv</div>
<div style="position:absolute;left:2348px;top:907.3px;width:190px;height:57px;background:#dde0f1;border-radius:19px;"></div>
<div style="position:absolute;left:2362px;top:924.4px;font-size:25.9px;line-height:25.9px;font-weight:400;color:#4a5eae;white-space:nowrap;">Invite pending</div>
<div style="position:absolute;left:2349px;top:960.9px;font-size:25.1px;line-height:25.1px;font-weight:400;color:#4a5eae;white-space:nowrap;">Resend invite</div>
<svg style="position:absolute;left:2614.5px;top:928.3px" width="44.4" height="44.4" viewBox="0 0 24 24" fill="none" stroke="#1d2136" stroke-width="1.55" stroke-linecap="round" stroke-linejoin="round"><path d="M11 2H9C4 2 2 4 2 9v6c0 5 2 7 7 7h6c5 0 7-2 7-7v-2" /><path d="M16.04 3.02 8.16 10.9c-.3.3-.6.89-.66 1.32l-.43 3.01c-.16 1.09.61 1.85 1.7 1.7l3.01-.43c.42-.06 1.01-.36 1.32-.66l7.88-7.88c1.36-1.36 2-2.94 0-4.94-2-2-3.58-1.36-4.94 0Z" /><path d="M14.91 4.15a7.144 7.144 0 0 0 4.94 4.94" /></svg>
<svg style="position:absolute;left:2694.5px;top:928.8px" width="44.4" height="44.4" viewBox="0 0 24 24" fill="none" stroke="#ec5673" stroke-width="1.55" stroke-linecap="round" stroke-linejoin="round"><path d="M21 5.98c-3.33-.33-6.68-.5-10.02-.5-1.98 0-3.96.1-5.94.3L3 5.98" /><path d="m8.5 4.97.22-1.31C8.88 2.71 9 2 10.69 2h2.62c1.69 0 1.82.75 1.97 1.67l.22 1.3" /><path d="m18.85 9.14-.65 10.07C18.09 20.78 18 22 15.21 22H8.79C6 22 5.91 20.78 5.8 19.21L5.15 9.14" /><path d="M10.33 16.5h3.33M9.5 12.5h5" /></svg>
<div style="position:absolute;left:193px;top:1034.4px;width:2577px;height:127px;background:#fefefe;border:2px solid #e1e4f3;box-sizing:border-box;border-radius:16px;border-left:3.5px solid #e2e7f2;border-right:3.5px solid #e2e7f2;"></div>
<div style="position:absolute;left:221.5px;top:1076.7px;width:43px;height:43.2px;background:#fefefe;border:2px solid #dcdae5;box-sizing:border-box;border-radius:9px;"></div>
<div style="position:absolute;left:352px;top:1084.2px;font-size:26px;line-height:26px;font-weight:400;color:#1e2439;white-space:nowrap;">20</div>
<div style="position:absolute;left:426px;top:1080.4px;width:37px;height:37px;border-radius:50%;background:#4b2c5e"></div>
<div style="position:absolute;left:477px;top:1084.2px;font-size:26px;line-height:26px;font-weight:400;color:#1e2439;white-space:nowrap;">Fett Boba (20)</div>
<div style="position:absolute;left:739px;top:1048.6000000000001px;width:300px;height:91.5px;background:#fefefe;border:1.8px solid #dbd9e5;box-sizing:border-box;border-radius:17px;"></div>
<div style="position:absolute;left:763px;top:1081.2px;font-size:28px;line-height:28px;font-weight:400;color:#536077;white-space:nowrap;">Employee</div>
<svg style="position:absolute;left:989px;top:1087.9px;overflow:visible" width="24" height="14.2" viewBox="989 1087.9 24 14.2" fill="none" ><path d="M991 1089.9L1001.0 1100.1000000000001L1011 1089.9" stroke="#a3a3ad" stroke-width="1.7" stroke-linecap="round" stroke-linejoin="round"/></svg>
<div style="position:absolute;left:1398px;top:1083.9px;font-size:26.3px;line-height:26.3px;font-weight:400;color:#1e2439;white-space:nowrap;">+37255541554</div>
<div style="position:absolute;left:2009px;top:1083.9px;font-size:25.7px;line-height:25.7px;font-weight:400;color:#1e2439;white-space:nowrap;">(GMT +03:00) Europe/Kyiv</div>
<div style="position:absolute;left:2348px;top:1050.4px;width:190px;height:57px;background:#dde0f1;border-radius:19px;"></div>
<div style="position:absolute;left:2362px;top:1067.5px;font-size:25.9px;line-height:25.9px;font-weight:400;color:#4a5eae;white-space:nowrap;">Invite pending</div>
<div style="position:absolute;left:2349px;top:1104.0px;font-size:25.1px;line-height:25.1px;font-weight:400;color:#4a5eae;white-space:nowrap;">Resend invite</div>
<svg style="position:absolute;left:2614.5px;top:1071.4px" width="44.4" height="44.4" viewBox="0 0 24 24" fill="none" stroke="#1d2136" stroke-width="1.55" stroke-linecap="round" stroke-linejoin="round"><path d="M11 2H9C4 2 2 4 2 9v6c0 5 2 7 7 7h6c5 0 7-2 7-7v-2" /><path d="M16.04 3.02 8.16 10.9c-.3.3-.6.89-.66 1.32l-.43 3.01c-.16 1.09.61 1.85 1.7 1.7l3.01-.43c.42-.06 1.01-.36 1.32-.66l7.88-7.88c1.36-1.36 2-2.94 0-4.94-2-2-3.58-1.36-4.94 0Z" /><path d="M14.91 4.15a7.144 7.144 0 0 0 4.94 4.94" /></svg>
<svg style="position:absolute;left:2694.5px;top:1071.9px" width="44.4" height="44.4" viewBox="0 0 24 24" fill="none" stroke="#ec5673" stroke-width="1.55" stroke-linecap="round" stroke-linejoin="round"><path d="M21 5.98c-3.33-.33-6.68-.5-10.02-.5-1.98 0-3.96.1-5.94.3L3 5.98" /><path d="m8.5 4.97.22-1.31C8.88 2.71 9 2 10.69 2h2.62c1.69 0 1.82.75 1.97 1.67l.22 1.3" /><path d="m18.85 9.14-.65 10.07C18.09 20.78 18 22 15.21 22H8.79C6 22 5.91 20.78 5.8 19.21L5.15 9.14" /><path d="M10.33 16.5h3.33M9.5 12.5h5" /></svg>
<div style="position:absolute;left:193px;top:1177.5px;width:2577px;height:127px;background:#fefefe;border:2px solid #e1e4f3;box-sizing:border-box;border-radius:16px;border-left:3.5px solid #e2e7f2;border-right:3.5px solid #e2e7f2;"></div>
<div style="position:absolute;left:221.5px;top:1219.8px;width:43px;height:43.2px;background:#fefefe;border:2px solid #dcdae5;box-sizing:border-box;border-radius:9px;"></div>
<div style="position:absolute;left:352px;top:1227.3px;font-size:26px;line-height:26px;font-weight:400;color:#1e2439;white-space:nowrap;">56</div>
<div style="position:absolute;left:426px;top:1223.5px;width:37px;height:37px;border-radius:50%;background:#c95fa0"></div>
<div style="position:absolute;left:477px;top:1227.3px;font-size:26px;line-height:26px;font-weight:400;color:#1e2439;white-space:nowrap;">Fisher Sam (56)</div>
<div style="position:absolute;left:739px;top:1191.7px;width:300px;height:91.5px;background:#fefefe;border:1.8px solid #dbd9e5;box-sizing:border-box;border-radius:17px;"></div>
<div style="position:absolute;left:763px;top:1224.3px;font-size:28px;line-height:28px;font-weight:400;color:#536077;white-space:nowrap;">Employee</div>
<svg style="position:absolute;left:989px;top:1231.0px;overflow:visible" width="24" height="14.2" viewBox="989 1231.0 24 14.2" fill="none" ><path d="M991 1233.0L1001.0 1243.2L1011 1233.0" stroke="#a3a3ad" stroke-width="1.7" stroke-linecap="round" stroke-linejoin="round"/></svg>
<div style="position:absolute;left:1398px;top:1227.0px;font-size:26.3px;line-height:26.3px;font-weight:400;color:#1e2439;white-space:nowrap;">+12025550142</div>
<div style="position:absolute;left:1627px;top:1228.5px;font-size:26px;line-height:26px;font-weight:400;color:#1e2439;white-space:nowrap;">sam.fisher@email.com</div>
<div style="position:absolute;left:2009px;top:1227.0px;font-size:25.7px;line-height:25.7px;font-weight:400;color:#1e2439;white-space:nowrap;">(GMT +03:00) Europe/Kyiv</div>
<div style="position:absolute;left:2348px;top:1193.5px;width:190px;height:57px;background:#dde0f1;border-radius:19px;"></div>
<div style="position:absolute;left:2362px;top:1210.6px;font-size:25.9px;line-height:25.9px;font-weight:400;color:#4a5eae;white-space:nowrap;">Invite pending</div>
<div style="position:absolute;left:2349px;top:1247.1px;font-size:25.1px;line-height:25.1px;font-weight:400;color:#4a5eae;white-space:nowrap;">Resend invite</div>
<svg style="position:absolute;left:2614.5px;top:1214.5px" width="44.4" height="44.4" viewBox="0 0 24 24" fill="none" stroke="#1d2136" stroke-width="1.55" stroke-linecap="round" stroke-linejoin="round"><path d="M11 2H9C4 2 2 4 2 9v6c0 5 2 7 7 7h6c5 0 7-2 7-7v-2" /><path d="M16.04 3.02 8.16 10.9c-.3.3-.6.89-.66 1.32l-.43 3.01c-.16 1.09.61 1.85 1.7 1.7l3.01-.43c.42-.06 1.01-.36 1.32-.66l7.88-7.88c1.36-1.36 2-2.94 0-4.94-2-2-3.58-1.36-4.94 0Z" /><path d="M14.91 4.15a7.144 7.144 0 0 0 4.94 4.94" /></svg>
<svg style="position:absolute;left:2694.5px;top:1215.0px" width="44.4" height="44.4" viewBox="0 0 24 24" fill="none" stroke="#ec5673" stroke-width="1.55" stroke-linecap="round" stroke-linejoin="round"><path d="M21 5.98c-3.33-.33-6.68-.5-10.02-.5-1.98 0-3.96.1-5.94.3L3 5.98" /><path d="m8.5 4.97.22-1.31C8.88 2.71 9 2 10.69 2h2.62c1.69 0 1.82.75 1.97 1.67l.22 1.3" /><path d="m18.85 9.14-.65 10.07C18.09 20.78 18 22 15.21 22H8.79C6 22 5.91 20.78 5.8 19.21L5.15 9.14" /><path d="M10.33 16.5h3.33M9.5 12.5h5" /></svg>
<div style="position:absolute;left:193px;top:1320.6px;width:2577px;height:127px;background:#fefefe;border:2px solid #e1e4f3;box-sizing:border-box;border-radius:16px;border-left:3.5px solid #e2e7f2;border-right:3.5px solid #e2e7f2;"></div>
<div style="position:absolute;left:221.5px;top:1362.8999999999999px;width:43px;height:43.2px;background:#fefefe;border:2px solid #dcdae5;box-sizing:border-box;border-radius:9px;"></div>
<div style="position:absolute;left:352px;top:1370.4px;font-size:26px;line-height:26px;font-weight:400;color:#1e2439;white-space:nowrap;">3</div>
<div style="position:absolute;left:426px;top:1366.6px;width:37px;height:37px;border-radius:50%;background:#cd7660"></div>
<div style="position:absolute;left:477px;top:1370.4px;font-size:26px;line-height:26px;font-weight:400;color:#1e2439;white-space:nowrap;">Freeman Gordon (3)</div>
<div style="position:absolute;left:739px;top:1334.8px;width:300px;height:91.5px;background:#fefefe;border:1.8px solid #dbd9e5;box-sizing:border-box;border-radius:17px;"></div>
<div style="position:absolute;left:763px;top:1367.4px;font-size:28px;line-height:28px;font-weight:400;color:#536077;white-space:nowrap;">Employee</div>
<svg style="position:absolute;left:989px;top:1374.1px;overflow:visible" width="24" height="14.2" viewBox="989 1374.1 24 14.2" fill="none" ><path d="M991 1376.1L1001.0 1386.3L1011 1376.1" stroke="#a3a3ad" stroke-width="1.7" stroke-linecap="round" stroke-linejoin="round"/></svg>
<div style="position:absolute;left:1398px;top:1370.1px;font-size:26.3px;line-height:26.3px;font-weight:400;color:#1e2439;white-space:nowrap;">+12025550143</div>
<div style="position:absolute;left:1627px;top:1371.6px;font-size:26px;line-height:26px;font-weight:400;color:#1e2439;white-space:nowrap;">gordon.freeman@email.com</div>
<div style="position:absolute;left:2009px;top:1370.1px;font-size:25.7px;line-height:25.7px;font-weight:400;color:#1e2439;white-space:nowrap;">(GMT +03:00) Europe/Kyiv</div>
<div style="position:absolute;left:2348px;top:1336.6px;width:190px;height:57px;background:#dde0f1;border-radius:19px;"></div>
<div style="position:absolute;left:2362px;top:1353.7px;font-size:25.9px;line-height:25.9px;font-weight:400;color:#4a5eae;white-space:nowrap;">Invite pending</div>
<div style="position:absolute;left:2349px;top:1390.2px;font-size:25.1px;line-height:25.1px;font-weight:400;color:#4a5eae;white-space:nowrap;">Resend invite</div>
<svg style="position:absolute;left:2614.5px;top:1357.6px" width="44.4" height="44.4" viewBox="0 0 24 24" fill="none" stroke="#1d2136" stroke-width="1.55" stroke-linecap="round" stroke-linejoin="round"><path d="M11 2H9C4 2 2 4 2 9v6c0 5 2 7 7 7h6c5 0 7-2 7-7v-2" /><path d="M16.04 3.02 8.16 10.9c-.3.3-.6.89-.66 1.32l-.43 3.01c-.16 1.09.61 1.85 1.7 1.7l3.01-.43c.42-.06 1.01-.36 1.32-.66l7.88-7.88c1.36-1.36 2-2.94 0-4.94-2-2-3.58-1.36-4.94 0Z" /><path d="M14.91 4.15a7.144 7.144 0 0 0 4.94 4.94" /></svg>
<svg style="position:absolute;left:2694.5px;top:1358.1px" width="44.4" height="44.4" viewBox="0 0 24 24" fill="none" stroke="#ec5673" stroke-width="1.55" stroke-linecap="round" stroke-linejoin="round"><path d="M21 5.98c-3.33-.33-6.68-.5-10.02-.5-1.98 0-3.96.1-5.94.3L3 5.98" /><path d="m8.5 4.97.22-1.31C8.88 2.71 9 2 10.69 2h2.62c1.69 0 1.82.75 1.97 1.67l.22 1.3" /><path d="m18.85 9.14-.65 10.07C18.09 20.78 18 22 15.21 22H8.79C6 22 5.91 20.78 5.8 19.21L5.15 9.14" /><path d="M10.33 16.5h3.33M9.5 12.5h5" /></svg>
<div style="position:absolute;left:193px;top:1463.7px;width:2577px;height:127px;background:#fefefe;border:2px solid #e1e4f3;box-sizing:border-box;border-radius:16px;border-left:3.5px solid #e2e7f2;border-right:3.5px solid #e2e7f2;"></div>
<div style="position:absolute;left:221.5px;top:1506.0px;width:43px;height:43.2px;background:#fefefe;border:2px solid #dcdae5;box-sizing:border-box;border-radius:9px;"></div>
<div style="position:absolute;left:426px;top:1509.7px;width:37px;height:37px;border-radius:50%;background:#4b2c5e"></div>
<div style="position:absolute;left:477px;top:1513.5px;font-size:26px;line-height:26px;font-weight:400;color:#1e2439;white-space:nowrap;">Granger Hermione</div>
<div style="position:absolute;left:739px;top:1477.9px;width:300px;height:91.5px;background:#fefefe;border:1.8px solid #dbd9e5;box-sizing:border-box;border-radius:17px;"></div>
<div style="position:absolute;left:763px;top:1510.5px;font-size:28px;line-height:28px;font-weight:400;color:#536077;white-space:nowrap;">Employee</div>
<svg style="position:absolute;left:989px;top:1517.2px;overflow:visible" width="24" height="14.2" viewBox="989 1517.2 24 14.2" fill="none" ><path d="M991 1519.2L1001.0 1529.4L1011 1519.2" stroke="#a3a3ad" stroke-width="1.7" stroke-linecap="round" stroke-linejoin="round"/></svg>
<div style="position:absolute;left:2009px;top:1513.2px;font-size:25.7px;line-height:25.7px;font-weight:400;color:#1e2439;white-space:nowrap;">(GMT +03:00) Europe/Kyiv</div>
<div style="position:absolute;left:2348px;top:1497.7px;width:153px;height:56.5px;background:#fde8dd;border-radius:19px;"></div>
<div style="position:absolute;left:2362px;top:1513.1px;font-size:25.9px;line-height:25.9px;font-weight:400;color:#e0965a;white-space:nowrap;">Not invited</div>
<svg style="position:absolute;left:2614.5px;top:1500.7px" width="44.4" height="44.4" viewBox="0 0 24 24" fill="none" stroke="#1d2136" stroke-width="1.55" stroke-linecap="round" stroke-linejoin="round"><path d="M11 2H9C4 2 2 4 2 9v6c0 5 2 7 7 7h6c5 0 7-2 7-7v-2" /><path d="M16.04 3.02 8.16 10.9c-.3.3-.6.89-.66 1.32l-.43 3.01c-.16 1.09.61 1.85 1.7 1.7l3.01-.43c.42-.06 1.01-.36 1.32-.66l7.88-7.88c1.36-1.36 2-2.94 0-4.94-2-2-3.58-1.36-4.94 0Z" /><path d="M14.91 4.15a7.144 7.144 0 0 0 4.94 4.94" /></svg>
<svg style="position:absolute;left:2694.5px;top:1501.2px" width="44.4" height="44.4" viewBox="0 0 24 24" fill="none" stroke="#ec5673" stroke-width="1.55" stroke-linecap="round" stroke-linejoin="round"><path d="M21 5.98c-3.33-.33-6.68-.5-10.02-.5-1.98 0-3.96.1-5.94.3L3 5.98" /><path d="m8.5 4.97.22-1.31C8.88 2.71 9 2 10.69 2h2.62c1.69 0 1.82.75 1.97 1.67l.22 1.3" /><path d="m18.85 9.14-.65 10.07C18.09 20.78 18 22 15.21 22H8.79C6 22 5.91 20.78 5.8 19.21L5.15 9.14" /><path d="M10.33 16.5h3.33M9.5 12.5h5" /></svg>
<svg style="position:absolute;left:2652px;top:1292px" width="148" height="148" viewBox="2652 1292 148 148">
<defs><radialGradient id="cg" cx="0.55" cy="0.72" r="0.75"><stop offset="0" stop-color="#b6c5f0"/><stop offset="0.45" stop-color="#c9d3f4"/><stop offset="1" stop-color="#ffffff"/></radialGradient>
<filter id="cs" x="-30%" y="-30%" width="160%" height="160%"><feDropShadow dx="0" dy="6" stdDeviation="8" flood-color="#3040a0" flood-opacity="0.10"/></filter></defs>
<circle cx="2726" cy="1366" r="54" fill="#3b6fe9" filter="url(#cs)"/>
<path d="M2697 1348.4L2750.5 1342.2C2752 1342 2753 1343 2753.2 1344.5L2756 1375.5C2756.2 1377 2755.4 1378 2754 1378.2L2735 1380.8L2727.8 1392.3L2717.7 1382.7L2699.6 1384.6C2698.2 1384.8 2697.4 1384 2697.3 1382.5L2695 1351.3C2694.9 1349.8 2695.6 1348.6 2697 1348.4Z" fill="url(#cg)"/>
</svg>
<svg style="position:absolute;left:0;top:1560px" width="40" height="40" viewBox="0 1560 40 40"><path d="M0 1576.5Q4 1595 31.5 1600H0Z" fill="#c4c3c7"/><path d="M0 1576.5Q4 1595 31.5 1600" fill="none" stroke="#9d9ca2" stroke-width="1"/></svg>
<svg style="position:absolute;left:2760px;top:1560px" width="60" height="40" viewBox="2760 1560 60 40"><path d="M2820 1584Q2806 1596 2776 1600H2820Z" fill="#c4c3c7"/><path d="M2820 1584Q2806 1596 2776 1600" fill="none" stroke="#8a8990" stroke-width="1.2"/></svg>
</body></html>
